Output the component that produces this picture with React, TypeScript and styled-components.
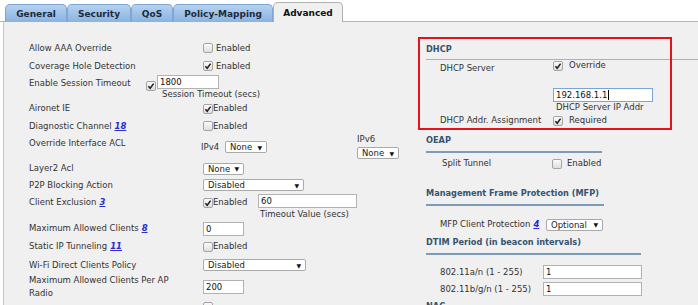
import styled, { createGlobalStyle } from "styled-components";

const GlobalStyle = createGlobalStyle`
  html, body { margin: 0; padding: 0; background: #fff; }
  body {
    font-family: "DejaVu Sans", Verdana, sans-serif;
    font-size: 8.5px;
    color: #333;
  }
`;

const Page = styled.div`
  position: relative;
  width: 698px;
  height: 305px;
  overflow: hidden;
`;

const TabStrip = styled.div`
  display: flex;
  align-items: flex-end;
  height: 21px;
  padding-left: 5px;
  border-bottom: 1px solid #b5b5b5;
`;

const Tab = styled.div<{ $w: number; $active?: boolean }>`
  width: ${(p) => p.$w}px;
  height: ${(p) => (p.$active ? 20 : 18)}px;
  margin-bottom: -1px;
  box-sizing: border-box;
  display: flex;
  align-items: center;
  justify-content: center;
  border: 1px solid ${(p) => (p.$active ? "#b0b0b0" : "#7ea6d2")};
  border-bottom: none;
  border-radius: 5px 5px 0 0;
  background: ${(p) => (p.$active ? "#f0f0f0" : "linear-gradient(#b6d2f0, #89b3e0)")};
  color: ${(p) => (p.$active ? "#111" : "#1b2b3d")};
  font-weight: bold;
  font-size: 9px;
`;

const Panel = styled.div`
  margin-left: 3px;
  height: 283px;
  background: #f0f0f0;
  border-left: 1px solid #c6c6c6;
  display: flex;
`;

const LeftCol = styled.div`
  width: 414px;
  flex: none;
  box-sizing: border-box;
  padding: 17px 0 0 25px;
`;

const RightCol = styled.div`
  flex: 1;
  padding-left: 8px;
`;

const Row = styled.div<{ $h: number; $cols?: number; $top?: boolean }>`
  display: grid;
  grid-template-columns: ${(p) => p.$cols ?? 174}px 1fr;
  height: ${(p) => p.$h}px;
  align-items: ${(p) => (p.$top ? "start" : "center")};
`;

const Label = styled.div<{ $mt?: number }>`
  line-height: 13px;
  margin-top: ${(p) => p.$mt ?? 0}px;
  color: #333;
  white-space: nowrap;
`;

const Ref = styled.span`
  margin-left: 3px;
  color: #2b2bd0;
  font-weight: bold;
  font-style: italic;
  text-decoration: underline;
`;

const Box = styled.span<{ $mt?: number }>`
  display: inline-flex;
  align-items: center;
  justify-content: center;
  width: 10px;
  height: 10px;
  box-sizing: border-box;
  flex: none;
  margin-top: ${(p) => p.$mt ?? 0}px;
  border: 1px solid #a4a4a4;
  border-radius: 2px;
  background: linear-gradient(#fbfbfb, #dedede);
`;

const CheckLine = styled.div<{ $gap: number; $mt?: number }>`
  display: flex;
  align-items: center;
  gap: ${(p) => p.$gap}px;
  line-height: 13px;
  margin-top: ${(p) => p.$mt ?? 0}px;
  color: #2f2f2f;
`;

const Select = styled.div<{ $w: number; $mt?: number }>`
  width: ${(p) => p.$w}px;
  height: 12px;
  margin-top: ${(p) => p.$mt ?? 0}px;
  box-sizing: border-box;
  display: flex;
  align-items: center;
  justify-content: space-between;
  padding: 0 4px 0 4px;
  border: 1px solid #a9a9a9;
  border-radius: 2px;
  background: #fff;
  color: #222;
`;

const Arrow = styled.span`
  font-size: 6px;
  color: #111;
`;

const Field = styled.div<{ $w: number; $focus?: boolean; $mt?: number }>`
  width: ${(p) => p.$w}px;
  height: 14px;
  margin-top: ${(p) => p.$mt ?? 0}px;
  box-sizing: border-box;
  display: flex;
  align-items: center;
  padding-left: 2px;
  border: 1px solid ${(p) => (p.$focus ? "#78a5db" : "#b2b2b2")};
  background: #fff;
  color: #111;
`;

const Caret = styled.span`
  width: 1px;
  height: 10px;
  margin-left: 1px;
  background: #000;
`;

const SubField = styled.div<{ $ml?: number }>`
  display: flex;
  flex-direction: column;
  margin-left: ${(p) => p.$ml ?? 0}px;
`;

const Caption = styled.div<{ $ml: number; $mt?: number }>`
  line-height: 11px;
  margin-left: ${(p) => p.$ml}px;
  margin-top: ${(p) => p.$mt ?? 0}px;
  color: #333;
  white-space: nowrap;
`;

const Inline = styled.div`
  display: flex;
  align-items: flex-start;
`;

const ExclusionControls = styled.div`
  display: grid;
  grid-template-columns: 55px auto;
  align-items: start;
`;

const IpTag = styled.span`
  width: 24px;
  line-height: 12px;
  margin-top: 6px;
`;

const Ipv6Block = styled.div`
  display: flex;
  flex-direction: column;
  margin-left: 90px;
  margin-top: -1px;
`;

const Ipv6Tag = styled.span`
  line-height: 11px;
`;

const SectionTitle = styled.div<{ $w?: number; $mt: number; $thin?: boolean }>`
  width: ${(p) => (p.$w ? `${p.$w}px` : "auto")};
  margin-top: ${(p) => p.$mt}px;
  line-height: 13px;
  padding-bottom: ${(p) => (p.$thin ? 3 : 4)}px;
  border-bottom: ${(p) => (p.$thin ? "1px solid #9fb3c6" : "2px solid #7d9ab6")};
  color: #35546f;
  font-weight: bold;
  font-size: 8.2px;
  white-space: nowrap;
`;

const FormRow = styled.div<{ $label: number; $h: number; $mt?: number; $indent?: number; $top?: boolean }>`
  display: grid;
  grid-template-columns: ${(p) => p.$label}px 1fr;
  height: ${(p) => p.$h}px;
  margin-top: ${(p) => p.$mt ?? 0}px;
  padding-left: ${(p) => p.$indent ?? 14}px;
  align-items: ${(p) => (p.$top ? "start" : "center")};
`;

const Highlight = styled.div`
  position: absolute;
  left: 418px;
  top: 37px;
  width: 254px;
  height: 93px;
  box-sizing: border-box;
  border: 2px solid #e3121c;
  pointer-events: none;
`;

function Tick() {
  return (
    <svg width="8" height="8" viewBox="0 0 8 8">
      <path d="M1.4 4.2 L3.2 6.2 L6.6 1.6" stroke="#1e1e1e" strokeWidth="1.5" fill="none" />
    </svg>
  );
}

function Check({ checked, text, gap = 3, mt }: { checked?: boolean; text?: string; gap?: number; mt?: number }) {
  return (
    <CheckLine $gap={gap} $mt={mt}>
      <Box>{checked && <Tick />}</Box>
      {text && <span>{text}</span>}
    </CheckLine>
  );
}

function Drop({ w, value, mt }: { w: number; value: string; mt?: number }) {
  return (
    <Select $w={w} $mt={mt}>
      <span>{value}</span>
      <Arrow>▼</Arrow>
    </Select>
  );
}

const tabs = [
  { name: "General", w: 62 },
  { name: "Security", w: 64 },
  { name: "QoS", w: 42 },
  { name: "Policy-Mapping", w: 100 },
  { name: "Advanced", w: 70, active: true },
];

export default function App() {
  return (
    <Page>
      <GlobalStyle />
      <TabStrip>
        {tabs.map((t) => (
          <Tab key={t.name} $w={t.w} $active={t.active}>
            {t.name}
          </Tab>
        ))}
      </TabStrip>
      <Panel>
        <LeftCol>
          <Row $h={18}>
            <Label>Allow AAA Override</Label>
            <Check text="Enabled" />
          </Row>
          <Row $h={18}>
            <Label>Coverage Hole Detection</Label>
            <Check checked text="Enabled" />
          </Row>
          <Row $h={25} $cols={117} $top>
            <Label $mt={2}>Enable Session Timeout</Label>
            <Inline>
              <Box $mt={6}>
                <Tick />
              </Box>
              <SubField $ml={1}>
                <Field $w={62}>1800</Field>
                <Caption $ml={5}>Session Timeout (secs)</Caption>
              </SubField>
            </Inline>
          </Row>
          <Row $h={17}>
            <Label>Aironet IE</Label>
            <Check checked text="Enabled" gap={0} />
          </Row>
          <Row $h={18}>
            <Label>
              Diagnostic Channel<Ref>18</Ref>
            </Label>
            <Check text="Enabled" gap={0} />
          </Row>
          <Row $h={26} $cols={172} $top>
            <Label $mt={2}>Override Interface ACL</Label>
            <Inline>
              <IpTag>IPv4</IpTag>
              <Drop w={42} value="None" mt={6} />
              <Ipv6Block>
                <Ipv6Tag>IPv6</Ipv6Tag>
                <Drop w={42} value="None" mt={2} />
              </Ipv6Block>
            </Inline>
          </Row>
          <Row $h={15}>
            <Label>Layer2 Acl</Label>
            <Drop w={41} value="None" />
          </Row>
          <Row $h={18}>
            <Label>P2P Blocking Action</Label>
            <Drop w={101} value="Disabled" />
          </Row>
          <Row $h={26} $top>
            <Label $mt={2}>
              Client Exclusion<Ref>3</Ref>
            </Label>
            <ExclusionControls>
              <Check checked text="Enabled" gap={0} mt={2} />
              <SubField>
                <Field $w={99}>60</Field>
                <Caption $ml={2} $mt={1}>
                  Timeout Value (secs)
                </Caption>
              </SubField>
            </ExclusionControls>
          </Row>
          <Row $h={17}>
            <Label>
              Maximum Allowed Clients<Ref>8</Ref>
            </Label>
            <Field $w={41}>0</Field>
          </Row>
          <Row $h={19}>
            <Label>
              Static IP Tunneling<Ref>11</Ref>
            </Label>
            <Check text="Enabled" gap={0} />
          </Row>
          <Row $h={18}>
            <Label>Wi-Fi Direct Clients Policy</Label>
            <Drop w={103} value="Disabled" />
          </Row>
          <Row $h={24}>
            <Label>
              Maximum Allowed Clients Per AP
              <br />
              Radio
            </Label>
            <Field $w={41}>200</Field>
          </Row>
          <Row $h={10} $top>
            <Label />
            <Box $mt={4} />
          </Row>
        </LeftCol>

        <RightCol>
          <SectionTitle $mt={21} $thin>
            DHCP
          </SectionTitle>
          <FormRow $label={113} $h={18} $top>
            <Label $mt={2}>DHCP Server</Label>
            <Check checked text="Override" gap={6} mt={-1} />
          </FormRow>
          <FormRow $label={113} $h={35} $top>
            <span />
            <SubField>
              <Field $w={100} $focus $mt={10}>
                192.168.1.1
                <Caret />
              </Field>
              <Caption $ml={3}>DHCP Server IP Addr</Caption>
            </SubField>
          </FormRow>
          <FormRow $label={113} $h={15}>
            <Label>DHCP Addr. Assignment</Label>
            <Check checked text="Required" gap={6} />
          </FormRow>

          <SectionTitle $mt={6} $w={176}>
            OEAP
          </SectionTitle>
          <FormRow $label={110} $indent={16} $h={21}>
            <Label>Split Tunnel</Label>
            <Check text="Enabled" gap={5} />
          </FormRow>

          <SectionTitle $mt={13} $w={178}>
            Management Frame Protection (MFP)
          </SectionTitle>
          <FormRow $label={106} $h={12} $mt={12}>
            <Label>
              MFP Client Protection<Ref>4</Ref>
            </Label>
            <Drop w={57} value="Optional" />
          </FormRow>

          <SectionTitle $mt={6} $w={215}>
            DTIM Period (in beacon intervals)
          </SectionTitle>
          <FormRow $label={103} $h={14} $mt={10}>
            <Label>802.11a/n (1 - 255)</Label>
            <Field $w={99}>1</Field>
          </FormRow>
          <FormRow $label={103} $h={14} $mt={3}>
            <Label>802.11b/g/n (1 - 255)</Label>
            <Field $w={99}>1</Field>
          </FormRow>

          <SectionTitle $mt={4} $w={215}>
            NAC
          </SectionTitle>
        </RightCol>
      </Panel>
      <Highlight />
    </Page>
  );
}
